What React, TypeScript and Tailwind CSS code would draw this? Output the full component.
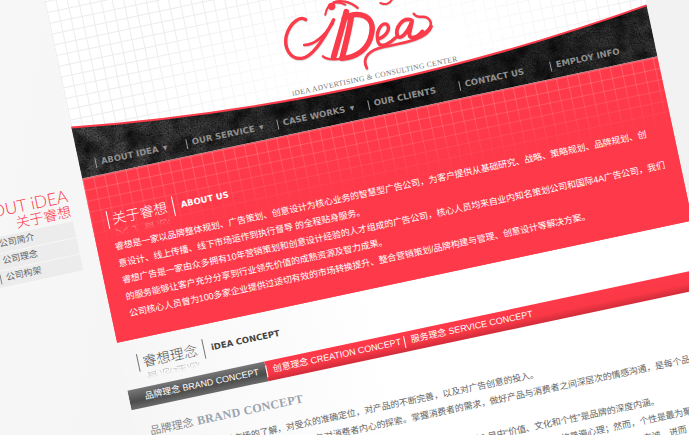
import React from 'react';

const navItems = [
  { label: 'ABOUT IDEA', arrow: true },
  { label: 'OUR SERVICE', arrow: true },
  { label: 'CASE WORKS', arrow: true },
  { label: 'OUR CLIENTS', arrow: false },
  { label: 'CONTACT US', arrow: false },
  { label: 'EMPLOY INFO', arrow: false },
];

const sideItems = ['公司简介', '公司理念', '公司构架'];

const introLines = [
  '睿想是一家以品牌整体规划、广告策划、创意设计为核心业务的智慧型广告公司，为客户提供从基础研究、战略、策略规划、品牌规划、创',
  '意设计、线上传播、线下市场运作到执行督导 的全程贴身服务。',
  '睿想广告是一家由众多拥有10年营销策划和创意设计经验的人才组成的广告公司，核心人员均来自业内知名策划公司和国际4A广告公司，我们',
  '的服务能够让客户充分分享到行业领先价值的成熟资源及智力成果。',
  '公司核心人员曾为100多家企业提供过适切有效的市场转换提升、整合营销策划/品牌构建与管理、创意设计等解决方案。',
];

// the red logo, traced in screen pixels x3 and turned back into the page's angle
const Logo = () => (
  <svg viewBox="0 0 588 190" className="absolute inset-0 h-[190px] w-[588px] overflow-visible">
    <g
      transform="rotate(12) translate(-42 9) translate(270 0) scale(0.3333)"
      fill="none"
      stroke="#fb3a4a"
      strokeLinecap="round"
      className="drop-shadow-[1px_2px_1px_rgba(0,0,0,0.22)]"
    >
      <path d="M106 60C90 48 60 68 48 108C40 145 60 180 94 176C125 172 160 120 190 60" strokeWidth="10" />
      <path d="M102 136C130 136 160 112 188 70" strokeWidth="8" />
      <path d="M228 36C217 80 202 130 190 172" strokeWidth="17" />
      <path d="M158 170C175 184 205 180 232 174" strokeWidth="7" />
      <path d="M165 45C170 12 195 0 225 15" strokeWidth="6" />
      <path d="M190 8C210 0 240 5 262 25" strokeWidth="7" />
      <circle cx="184" cy="20" r="11" fill="#fb3a4a" stroke="none" />
      <path d="M243 50C237 90 227 130 217 168" strokeWidth="17" />
      <path d="M222 56C266 30 316 50 304 102C296 148 258 174 214 176" strokeWidth="16" />
      <path d="M322 118C345 113 363 88 350 74C332 66 314 100 324 128C332 148 360 130 376 114" strokeWidth="10" />
      <path d="M425 62C397 50 374 85 381 108C388 122 410 105 426 62L417 103C417 120 440 116 456 95" strokeWidth="11" />
      <path d="M440 110C480 95 492 70 472 55C456 45 442 60 430 42" strokeWidth="7" />
      <path d="M484 80C470 120 400 130 340 142C300 150 272 172 290 206" strokeWidth="8" />
      <path d="M330 10C345 18 360 10 365 0" strokeWidth="6" />
    </g>
  </svg>
);

// dark concrete band with the curved top edge
const NavBand = () => (
  <svg viewBox="0 0 588 52" className="absolute inset-0 h-[52px] w-[588px] overflow-visible">
    <defs>
      <linearGradient id="band" x1="0" x2="1" y1="0" y2="0">
        <stop offset="0" stopColor="#505050" />
        <stop offset="0.3" stopColor="#3c3c3c" />
        <stop offset="0.5" stopColor="#202020" />
        <stop offset="0.8" stopColor="#2c2c2c" />
        <stop offset="1" stopColor="#3e3e3e" />
      </linearGradient>
      <filter id="grain" x="0" y="0" width="100%" height="100%">
        <feTurbulence type="fractalNoise" baseFrequency="0.9" numOctaves="2" seed="7" />
        <feColorMatrix values="0 0 0 0 0  0 0 0 0 0  0 0 0 0 0  1.8 0 0 0 -0.65" />
      </filter>
      <filter id="mottle" x="0" y="0" width="100%" height="100%">
        <feTurbulence type="fractalNoise" baseFrequency="0.06" numOctaves="3" seed="3" />
        <feColorMatrix values="0 0 0 0 0  0 0 0 0 0  0 0 0 0 0  1.5 0 0 0 -0.55" />
      </filter>
      <clipPath id="bandClip">
        <path d="M0 0Q294 40 588 0L588 52L0 52Z" />
      </clipPath>
    </defs>
    <path d="M0 0Q294 40 588 0L588 52L0 52Z" fill="url(#band)" />
    <g clipPath="url(#bandClip)">
      <rect x="0" y="-2" width="588" height="54" filter="url(#mottle)" />
      <rect x="0" y="-2" width="588" height="54" filter="url(#grain)" />
    </g>
    <path d="M0 0Q294 40 588 0" fill="none" stroke="#fb3a4a" strokeWidth="2" />
  </svg>
);

const TitleRow = ({ title, sub, dark }: { title: string; sub: string; dark?: boolean }) => (
  <div className={`flex h-5 items-center pl-4 ${dark ? 'text-[#555555]' : 'text-white'}`}>
    <span className={`h-[18px] w-px ${dark ? 'bg-[#777777]' : 'bg-white'}`} />
    <div className="relative ml-1 w-14">
      <p className="text-[14px] leading-5 font-light whitespace-nowrap">{title}</p>
      <div className="absolute top-[17px] left-0 h-[11px] overflow-hidden opacity-70 [mask-image:linear-gradient(to_bottom,black,transparent)]">
        <p className="-scale-y-100 text-[14px] leading-5 font-light whitespace-nowrap">{title}</p>
      </div>
    </div>
    <span className={`ml-[6px] h-5 w-px ${dark ? 'bg-[#777777]' : 'bg-white'}`} />
    <span className={`ml-[7px] font-['DejaVu_Sans',sans-serif] text-[8.5px] font-bold whitespace-nowrap ${dark ? 'text-[#444444]' : 'text-white'}`}>
      {sub}
    </span>
  </div>
);

export default function App() {
  return (
    <div className="h-[435px] w-[689px] overflow-hidden bg-[linear-gradient(100deg,#f7f7f7,#f3f3f3_60%,#f1f1f1)] font-['Liberation_Sans','Noto_Sans_CJK_SC',sans-serif]">
      <div className="mt-[26px] ml-[-124px] flex w-[758px] origin-top-left rotate-[-12deg]">
        {/* left column */}
        <aside className="w-[170px] shrink-0 pt-[198px] pr-[18px]">
          <p className="text-right font-['Lato',sans-serif] text-[17px] leading-4 font-light whitespace-nowrap text-[#fb3a4a]">
            ABOUT iDEA
          </p>
          <p className="text-right text-[14px] leading-4 font-light text-[#fb3a4a]">关于睿想</p>
          <ul className="mt-[2px] flex flex-col gap-px">
            {sideItems.map((item) => (
              <li key={item} className="flex h-4 items-center gap-[5px] bg-[#ececec] pl-[69px] text-[9px] text-[#666666]">
                <span className="h-[10px] w-px bg-[#888888]" />
                {item}
              </li>
            ))}
          </ul>
        </aside>

        <main className="w-[588px] shrink-0 bg-[linear-gradient(to_right,#f6f6f6,#ffffff_45%)]">
          {/* header + nav */}
          <div className="relative h-[192px] bg-[radial-gradient(ellipse_at_55%_70%,#ffffff_12%,rgba(255,255,255,0)_60%),linear-gradient(#ececec_1px,transparent_1px),linear-gradient(90deg,#ececec_1px,transparent_1px)] bg-white bg-[size:auto,11px_11px,11px_11px]">
            <Logo />
            <p className="absolute top-[147px] left-[223px] z-10 font-['Liberation_Serif',serif] text-[7.5px] tracking-[0.35px] whitespace-nowrap text-[#777777]">
              iDEA ADVERTISING &amp; CONSULTING CENTER
            </p>
            <div className="absolute inset-x-0 top-[140px] h-[52px]">
              <NavBand />
              <nav className="relative flex h-full items-end pb-[6px] pl-4">
                {navItems.map((item) => (
                  <div key={item.label} className="flex w-[93px] items-center gap-[5px]">
                    <span className="h-[10px] w-px bg-[#9a9a9a]" />
                    <span className="font-['DejaVu_Sans',sans-serif] text-[8.5px] font-bold whitespace-nowrap text-[#8f8f8f]">
                      {item.label}
                    </span>
                    {item.arrow && <span className="ml-[-2px] text-[8px] text-[#8f8f8f]">▼</span>}
                  </div>
                ))}
              </nav>
            </div>
          </div>

          {/* red intro panel */}
          <section className="h-[168px] overflow-hidden border-t border-[#e2707a] bg-[linear-gradient(to_bottom,rgba(254,58,74,0),#fe3a4a_70px),linear-gradient(rgba(255,255,255,0.2)_1px,transparent_1px),linear-gradient(90deg,rgba(255,255,255,0.2)_1px,transparent_1px)] bg-[#fe3a4a] bg-[size:auto,11px_11px,11px_11px] pt-[35px]">
            <TitleRow title="关于睿想" sub="ABOUT US" />
            <div className="mt-[10px] pl-[18px] text-[9px] leading-[17px] whitespace-nowrap text-white">
              {introLines.map((line) => (
                <p key={line} className="tracking-[-0.1px]">
                  {line}
                </p>
              ))}
            </div>
          </section>

          {/* concept block */}
          <section className="h-[260px] overflow-hidden pt-[14px]">
            <TitleRow title="睿想理念" sub="iDEA CONCEPT" dark />
            <div className="mt-[15px] flex h-5 text-[9px] whitespace-nowrap text-white">
              <div className="flex w-[140px] items-center bg-[linear-gradient(to_bottom,#777777,#4c4c4c_60%,#6c6c6c)] pl-4">
                品牌理念 BRAND CONCEPT
              </div>
              <div className="flex flex-1 items-center bg-[linear-gradient(to_bottom,#fe3a4a,#fb3846_60%,#d02c3a)]">
                <span className="h-3 w-px bg-white" />
                <span className="ml-[6px] w-[134px]">创意理念 CREATION CONCEPT</span>
                <span className="h-3 w-px bg-white" />
                <span className="ml-[6px]">服务理念 SERVICE CONCEPT</span>
              </div>
            </div>
            <h3 className="mt-[14px] flex h-5 items-center gap-1 pl-[14px] text-[11px] font-normal whitespace-nowrap text-[#888888]">
              品牌理念
              <span className="font-['Liberation_Serif',serif] text-[12px] font-bold tracking-[0.3px] text-[#9aa3ad]">BRAND CONCEPT</span>
            </h3>
            <div className="mt-[7px] pl-[14px] text-[9px] leading-[17px] whitespace-nowrap text-[#666666]">
              <p className="tracking-[-0.1px]">品牌理念就是通过对市场的了解，对受众的准确定位，对产品的不断完善，以及对广告创意的投入。</p>
              <p className="tracking-[-0.1px]">品牌的建立离不开对目标受众的深入研究与对消费者内心的探索。掌握消费者的需求，做好产品与消费者之间深层次的情感沟通，是每个品牌必须</p>
              <p className="mt-[17px] tracking-[-0.1px]">一个好的品牌之所以能够在竞争激烈的市场环境之中脱颖而出，就在于其在消费者心目中“价值、文化和个性”是品牌的深度内涵。</p>
              <p className="tracking-[-0.1px]">一个品牌的价值观与文化都是品牌长期发展的基础，能够满足消费者的物质需求与精神需求，符合大众的普遍心理；然而，个性是最为聚焦的表现方式。</p>
              <p className="tracking-[-0.1px]">只有鲜明而独特的个性才能真正引发消费者的关注，形成了品牌独特的记忆点与差异化的竞争优势，赢得消费者们的信赖与忠诚，进而</p>
            </div>
          </section>
        </main>
      </div>
    </div>
  );
}
